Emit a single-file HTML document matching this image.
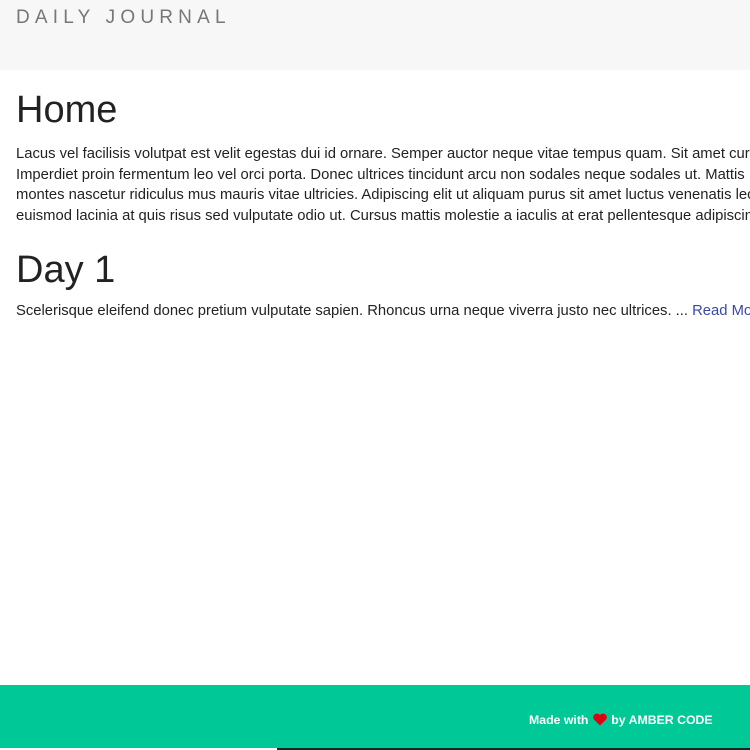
<!DOCTYPE html>
<html><head><style>
body{margin:0;width:750px;height:750px;overflow:hidden;background:#fff;font-family:"Liberation Sans",Arial,sans-serif;position:relative}
.hdr{position:absolute;left:0;top:0;width:750px;height:70px;background:#f7f7f7}
.hdr span{position:absolute;left:16px;top:7px;font-size:19px;letter-spacing:5.2px;color:#777}
h1{position:absolute;left:16px;margin:0;font-weight:normal;font-size:38px;color:#222}
p{position:absolute;left:16px;margin:0;font-size:14.8px;line-height:20.5px;color:#222;white-space:nowrap;width:760px;overflow:hidden}
.ft{position:absolute;left:0;top:685px;width:750px;height:63px;background:#00c896}
.ft span{position:absolute;left:529px;top:28px;font-size:12.3px;font-weight:bold;color:#fff;white-space:nowrap}
.bl{position:absolute;left:277px;top:748px;width:473px;height:2px;background:#0a2a22}
</style></head><body>
<div class="hdr"><span>DAILY JOURNAL</span></div>
<h1 style="top:89px">Home</h1>
<p style="top:144px">Lacus vel facilisis volutpat est velit egestas dui id ornare. Semper auctor neque vitae tempus quam. Sit amet cursus<br>Imperdiet proin fermentum leo vel orci porta. Donec ultrices tincidunt arcu non sodales neque sodales ut. Mattis<br>montes nascetur ridiculus mus mauris vitae ultricies. Adipiscing elit ut aliquam purus sit amet luctus venenatis lectus<br>euismod lacinia at quis risus sed vulputate odio ut. Cursus mattis molestie a iaculis at erat pellentesque adipiscing</p>
<h1 style="top:249px">Day 1</h1>
<p style="top:301px">Scelerisque eleifend donec pretium vulputate sapien. Rhoncus urna neque viverra justo nec ultrices. ... <span style="color:#3949ab">Read More</span></p>
<div class="ft"><span>Made with <svg width="16" height="13" viewBox="0 0 16 14" style="vertical-align:-2px"><path d="M8 13.5L1.5 7A4 4 0 0 1 8 2.3 4 4 0 0 1 14.5 7Z" fill="#e00010"/></svg> by AMBER CODE</span></div>
<div class="bl"></div>
</body></html>
